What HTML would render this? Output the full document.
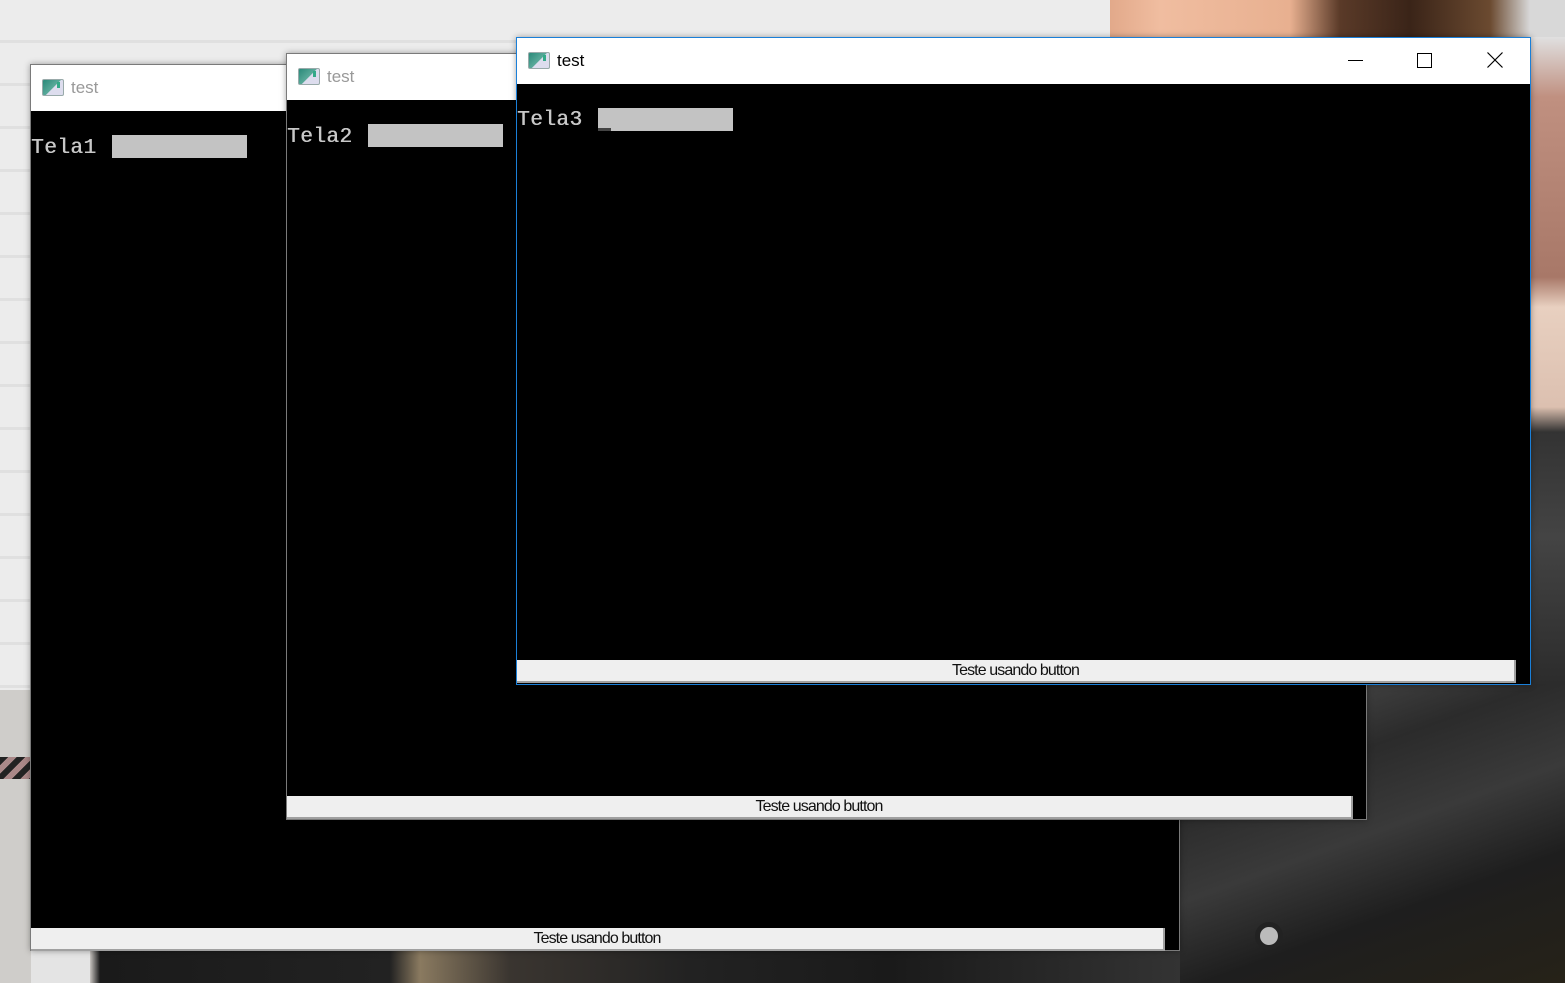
<!DOCTYPE html>
<html><head><meta charset="utf-8"><style>
*{margin:0;padding:0;box-sizing:border-box}
body{width:1565px;height:983px;overflow:hidden;position:relative;background:#e4e4e4;font-family:"Liberation Sans",sans-serif}
.abs{position:absolute}
.win{position:absolute;background:#000;border:1px solid #7a7a7a;box-shadow:0 0 6px rgba(0,0,0,.35)}
.title{position:absolute;left:0;right:0;top:0;height:46px;background:#fff}
.title .t{position:absolute;left:40px;top:13px;font-size:17px;color:#999}
.icon{position:absolute;left:11px;top:14px;width:22px;height:17px;border:1px solid #9aa;background:linear-gradient(135deg,#2a8a7a,#5aaa9a 50%,#dde 52%);border-radius:2px}
.icon:after{content:"";position:absolute;right:3px;top:2px;width:3px;height:6px;background:#3a8;}
.lbl{position:absolute;font-family:"Liberation Mono",monospace;font-size:21px;color:#c8c8c8;font-weight:normal;letter-spacing:0.5px;text-shadow:0.5px 0 0 #c8c8c8}
.edit{position:absolute;width:135px;height:23px;background:#c3c3c3}
.btn{position:absolute;height:23px;background:#efefef;border-right:2px solid #a0a0a0;border-bottom:2px solid #a0a0a0;text-align:center;font-size:16px;line-height:22px;color:#111;letter-spacing:-0.9px}
</style></head><body>
<div class="abs" style="left:0;top:0;width:1565px;height:700px;background:repeating-linear-gradient(180deg,#ececec 0 40px,#e0e0e0 40px 43px)"></div>
<div class="abs" style="left:0;top:690px;width:31px;height:293px;background:#cfcdca"></div>
<div class="abs" style="left:0;top:757px;width:31px;height:22px;background:repeating-linear-gradient(135deg,#222 0 6px,#a88 6px 12px)"></div>
<div class="abs" style="left:1110px;top:0;width:455px;height:40px;background:linear-gradient(90deg,#e2a98a 0,#f0bda0 50px,#e8b090 180px,#5a3a28 230px,#3a2418 300px,#6b4a30 380px,#d8d8d8 420px)"></div>
<div class="abs" style="left:1530px;top:37px;width:35px;height:660px;background:linear-gradient(180deg,#e0e0e0 0,#c09080 60px,#a87868 240px,#e8d0c0 270px,#dcc0b0 370px,#333 395px,#444 500px,#2a2a2a)"></div>
<div class="abs" style="left:1180px;top:684px;width:385px;height:299px;background:linear-gradient(160deg,#555 0,#2b2b2b 30%,#3a3a3a 50%,#1e1e1e 70%,#262218)"></div>
<div class="abs" style="left:90px;top:950px;width:1090px;height:33px;background:linear-gradient(90deg,#c8c4c0 0,#1a1a1a 10px,#222 300px,#8a7a60 330px,#3a3530 420px,#222 600px,#1a1a1a 800px,#333)"></div>
<div class="abs" style="left:1255px;top:922px;width:28px;height:28px;border-radius:50%;background:#bbb;border:5px solid #222"></div>

<div class="win" style="left:30px;top:64px;width:1150px;height:887px">
  <div class="title"><div class="icon"></div><div class="t">test</div></div>
  <div class="lbl" style="left:0;top:72px">Tela1</div>
  <div class="edit" style="left:81px;top:70px"></div>
  <div class="btn" style="left:0;top:863px;width:1134px">Teste usando button</div>
</div>
<div class="win" style="left:286px;top:53px;width:1081px;height:767px">
  <div class="title"><div class="icon"></div><div class="t">test</div></div>
  <div class="lbl" style="left:0;top:72px">Tela2</div>
  <div class="edit" style="left:81px;top:70px"></div>
  <div class="btn" style="left:0;top:742px;width:1066px">Teste usando button</div>
</div>
<div class="win" style="left:516px;top:37px;width:1015px;height:648px;border-color:#1a7fd8">
  <div class="title"><div class="icon"></div><div class="t" style="color:#000">test</div>
    <div class="abs" style="left:831px;top:22px;width:15px;height:1px;background:#000"></div>
    <div class="abs" style="left:900px;top:15px;width:15px;height:15px;border:1px solid #000"></div>
    <svg class="abs" style="left:970px;top:14px" width="16" height="16"><path d="M0.5 0.5L15.5 15.5M15.5 0.5L0.5 15.5" stroke="#000" stroke-width="1.2"/></svg>
  </div>
  <div class="lbl" style="left:0;top:71px">Tela3</div>
  <div class="edit" style="left:81px;top:70px"></div>
  <div class="abs" style="left:81px;top:90px;width:13px;height:3px;background:#444"></div>
  <div class="btn" style="left:0;top:622px;width:999px">Teste usando button</div>
</div>
</body></html>
